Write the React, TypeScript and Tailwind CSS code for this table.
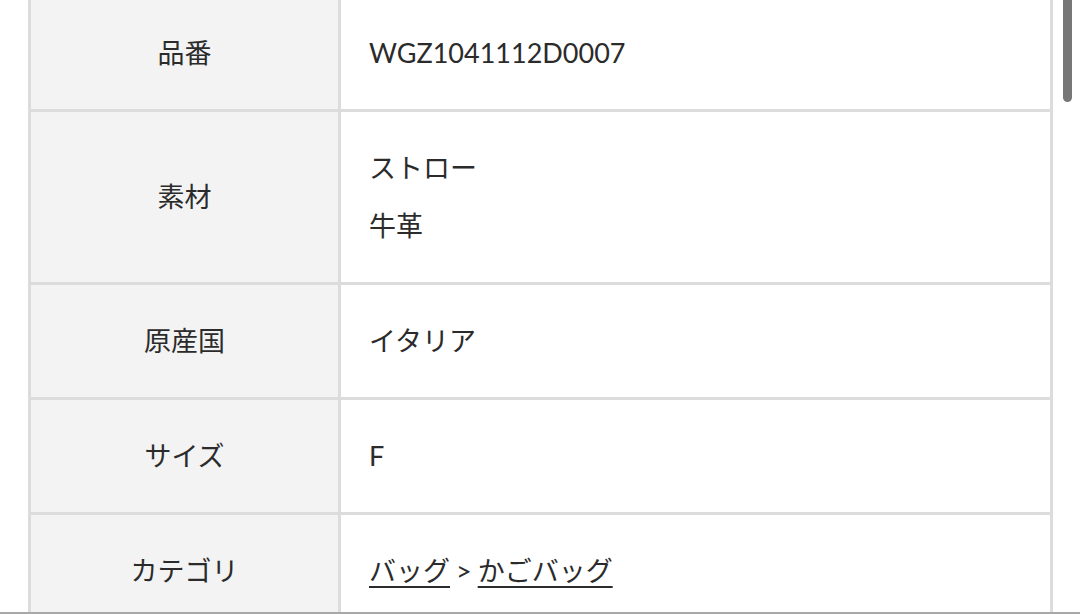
const rows: { label: string; values: React.ReactNode[] }[] = [
  { label: "品番", values: ["WGZ1041112D0007"] },
  { label: "素材", values: ["ストロー", "牛革"] },
  { label: "原産国", values: ["イタリア"] },
  { label: "サイズ", values: ["F"] },
  {
    label: "カテゴリ",
    values: [
      <span key="cat">
        <a href="#" className="underline decoration-2 underline-offset-[5px]">
          バッグ
        </a>
        <span className="mx-[6px]">&gt;</span>
        <a href="#" className="underline decoration-2 underline-offset-[5px]">
          かごバッグ
        </a>
      </span>,
    ],
  },
];

export default function App() {
  return (
    <main
      className="relative h-[614px] overflow-hidden bg-white text-[#2b2b2b]"
      style={{ fontFamily: "Lato, 'Noto Sans CJK JP', sans-serif" }}
    >
      {/* spec table */}
      <div className="ml-[28px] -mt-[3px] grid w-[1025px] grid-cols-[307px_1fr] gap-[3px] bg-[#dcdcdc] px-[3px] pb-[3px]">
        {rows.map((row) => (
          <div key={row.label} className="contents">
            <div className="flex items-center justify-center bg-[#f3f3f3] text-[27px]">
              {row.label}
            </div>
            <div className="flex flex-col gap-[18px] bg-white px-[28px] py-[36px] text-[27px]">
              {row.values.map((v, i) => (
                <div key={i} className="h-[40px] leading-[40px]">
                  {v}
                </div>
              ))}
            </div>
          </div>
        ))}
      </div>

      {/* scroll indicator */}
      <div className="absolute right-[8px] top-0 h-[102px] w-[9px] rounded-b-full bg-[#777777]" />
      <div className="absolute bottom-0 left-0 h-[2px] w-full bg-[#a8a8a8]" />
    </main>
  );
}
